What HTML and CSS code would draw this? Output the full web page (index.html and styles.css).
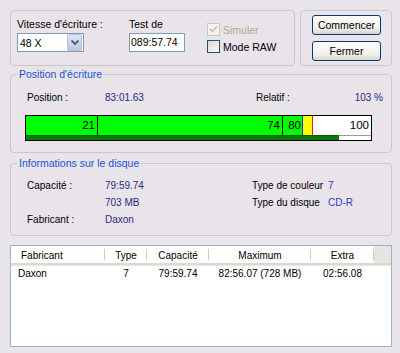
FILE: index.html
```html
<!DOCTYPE html>
<html lang="fr">
<head>
    <meta charset="UTF-8">
    <title>Écriture</title>
    <link rel="stylesheet" href="styles.css">
</head>
<body>
    <div class="window">
        <div class="top-row">
            <div class="box settings">
                <div class="field speed">
                    <label>Vitesse d'écriture :</label>
                    <div class="combo">
                        <span>48 X</span>
                        <span class="combo-btn">
                            <svg width="8" height="5" viewBox="0 0 8 5"><path d="M0.5 0.5 L4 4 L7.5 0.5" fill="none" stroke="#4a5a7c" stroke-width="1.8"/></svg>
                        </span>
                    </div>
                </div>
                <div class="field test">
                    <label>Test de</label>
                    <div class="textbox">089:57.74</div>
                </div>
                <div class="checks">
                    <div class="check disabled">
                        <span class="cb">
                            <svg width="11" height="11" viewBox="0 0 11 11"><path d="M2 5 L4.5 7.5 L9 2.5" fill="none" stroke="#c4c2b8" stroke-width="1.8"/></svg>
                        </span>
                        Simuler
                    </div>
                    <div class="check">
                        <span class="cb"></span>
                        Mode RAW
                    </div>
                </div>
            </div>
            <div class="box actions">
                <button class="btn">Commencer</button>
                <button class="btn">Fermer</button>
            </div>
        </div>

        <!-- Position -->
        <fieldset class="group">
            <legend>Position d'écriture</legend>
            <div class="pos-body">
                <div class="pos-row">
                    <span class="lbl">Position :</span>
                    <span class="val pos-val">83:01.63</span>
                    <span class="rel-lbl">Relatif :</span>
                    <span class="val">103 %</span>
                </div>
                <div class="bar">
                    <div class="segs">
                        <div class="seg s1">21</div>
                        <div class="seg s2">74</div>
                        <div class="seg s3">80</div>
                        <div class="seg s4"></div>
                        <div class="seg s5">100</div>
                    </div>
                    <div class="stripe"><div class="stripe-fill"></div></div>
                </div>
            </div>
        </fieldset>

        <!-- Disque -->
        <fieldset class="group disk">
            <legend>Informations sur le disque</legend>
            <div class="disk-body">
                <span class="lbl">Capacité :</span>
                <span class="val">79:59.74</span>
                <span>Type de couleur</span>
                <span class="val2">7</span>

                <span></span>
                <span class="val">703 MB</span>
                <span>Type du disque</span>
                <span class="val2">CD-R</span>

                <span class="lbl">Fabricant :</span>
                <span class="val">Daxon</span>
                <span></span>
                <span></span>
            </div>
        </fieldset>

        <div class="list">
            <div class="list-head">
                <div class="col c1">Fabricant</div>
                <div class="col c2">Type</div>
                <div class="col c3">Capacité</div>
                <div class="col c4">Maximum</div>
                <div class="col c5">Extra</div>
                <div class="col filler"></div>
            </div>
            <div class="list-row">
                <div class="col c1">Daxon</div>
                <div class="col c2">7</div>
                <div class="col c3">79:59.74</div>
                <div class="col c4">82:56.07 (728 MB)</div>
                <div class="col c5">02:56.08</div>
            </div>
        </div>
    </div>
</body>
</html>
```

FILE: styles.css
```css
* {
    margin: 0;
    padding: 0;
    box-sizing: border-box;
}

body {
    background: #e8e4e9;
    font-family: "Liberation Sans", Arial, sans-serif;
    font-size: 10px;
    color: #000;
    white-space: nowrap;
}

.window {
    width: 400px;
    padding: 10px 8px 0 10px;
}

/* Haut */
.top-row {
    display: flex;
    gap: 5px;
    height: 56px;
}

.box {
    border: 1px solid #cbc7cf;
    border-radius: 4px;
}

.settings {
    width: 285px;
    display: flex;
    padding: 7px 0 0 6px;
}

.field {
    display: flex;
    flex-direction: column;
    gap: 2px;
}

.field label {
    line-height: 13px;
    font-size: 10.5px;
}

.speed {
    width: 112px;
}

.test {
    width: 78px;
}

.combo {
    width: 67px;
    height: 19px;
    border: 1px solid #7f9db9;
    background: #fff;
    display: flex;
    align-items: center;
    justify-content: space-between;
    padding: 0 1px 0 2px;
    font-size: 10.5px;
}

.combo-btn {
    width: 15px;
    height: 17px;
    border: 1px solid #b4c1dc;
    border-radius: 2px;
    background: linear-gradient(#dfe5f2, #bcc8e0);
    display: flex;
    align-items: center;
    justify-content: center;
}

.textbox {
    width: 56px;
    height: 19px;
    border: 1px solid #7f9db9;
    background: #fff;
    line-height: 17px;
    padding-left: 1px;
    font-size: 10.5px;
}

.checks {
    margin-top: 5px;
    display: flex;
    flex-direction: column;
    gap: 4px;
    font-size: 10.5px;
}

.check {
    display: flex;
    align-items: center;
    gap: 3px;
    height: 13px;
}

.cb {
    width: 13px;
    height: 13px;
    border: 1px solid #1c5180;
    background: linear-gradient(135deg, #d8d8d2, #fbfbf9);
    display: flex;
    align-items: center;
    justify-content: center;
}

.check.disabled {
    color: #aca899;
}

.check.disabled .cb {
    border-color: #cac8bb;
    background: #f4f3ee;
}

.actions {
    flex: 1;
    display: flex;
    flex-direction: column;
    gap: 6px;
    padding: 4px 0 0 11px;
}

.btn {
    width: 69px;
    height: 20px;
    border: 1px solid #003c74;
    border-radius: 3px;
    background: linear-gradient(#ffffff, #f1efea 70%, #d8d4cb);
    font-family: "Liberation Sans", Arial, sans-serif;
    font-size: 10.5px;
    color: #000;
}

/* Groupes */
.group {
    border: 1px solid #cbc7cf;
    border-radius: 4px;
    margin-top: 2px;
    padding: 0;
}

.group legend {
    margin-left: 6px;
    padding: 0 2px;
    line-height: 13px;
    font-size: 10.5px;
    color: #1d50d6;
}

.lbl {
    color: #000;
}

.val {
    color: #2a2a88;
}

.val2 {
    color: #2a3ac6;
}

.pos-body {
    padding: 10px 8px 11px 16px;
}

.pos-row {
    display: flex;
    line-height: 13px;
}

.pos-row .lbl {
    width: 78px;
}

.pos-val {
    width: 151px;
}

.rel-lbl {
    flex: 1;
}

.bar {
    width: 347px;
    height: 26px;
    margin: 11px 0 0 -2px;
    border: 1px solid #000;
    background: #fff;
}

.segs {
    display: flex;
    height: 19px;
}

.seg {
    background: #00ff00;
    border-right: 1px solid #000;
    text-align: right;
    line-height: 19px;
    padding-right: 2px;
    font-size: 11.5px;
}

.s1 { width: 72px; }
.s2 { width: 185px; }
.s3 { width: 20px; border-right-color: #1a2cff; padding-right: 1px; }
.s4 { width: 10px; background: #ffff00; border-right-color: #ff1a1a; }
.s5 { flex: 1; background: #fff; border-right: none; }

.stripe {
    height: 5px;
    background: #fff;
    box-shadow: inset 0 1px 0 #9a9a9a;
}

.stripe-fill {
    width: 313px;
    height: 5px;
    background: #0a7a0a;
    box-shadow: inset 0 1px 0 #0a5a0a;
}

.disk {
    margin-top: 4px;
}

.disk-body {
    display: grid;
    grid-template-columns: 78px 147px 76px auto;
    line-height: 17px;
    padding: 7px 8px 7px 16px;
}

/* Liste */
.list {
    margin-top: 9px;
    height: 102px;
    border: 1px solid #9fb3cb;
    background: #fff;
}

.list-head {
    display: flex;
    height: 19px;
    border-bottom: 2px solid #dcd9d0;
    box-shadow: 0 1px 0 #e9e7e1;
}

.list-head .col {
    line-height: 17px;
    padding-top: 1px;
    background: linear-gradient(#cfcdc6, #cfcdc6) right 3px / 1px 11px no-repeat;
}

.list-head .filler {
    flex: 1;
    background: #e6e4df;
}

.list-row {
    display: flex;
    line-height: 15px;
    margin-top: 1px;
}

.col {
    text-align: center;
}

.c1 { width: 94px; text-align: left; padding-left: 7px; }
.list-head .c1 { padding-left: 10px; }
.c2 { width: 42px; }
.c3 { width: 62px; }
.c4 { width: 102px; }
.c5 { width: 63px; }
```
